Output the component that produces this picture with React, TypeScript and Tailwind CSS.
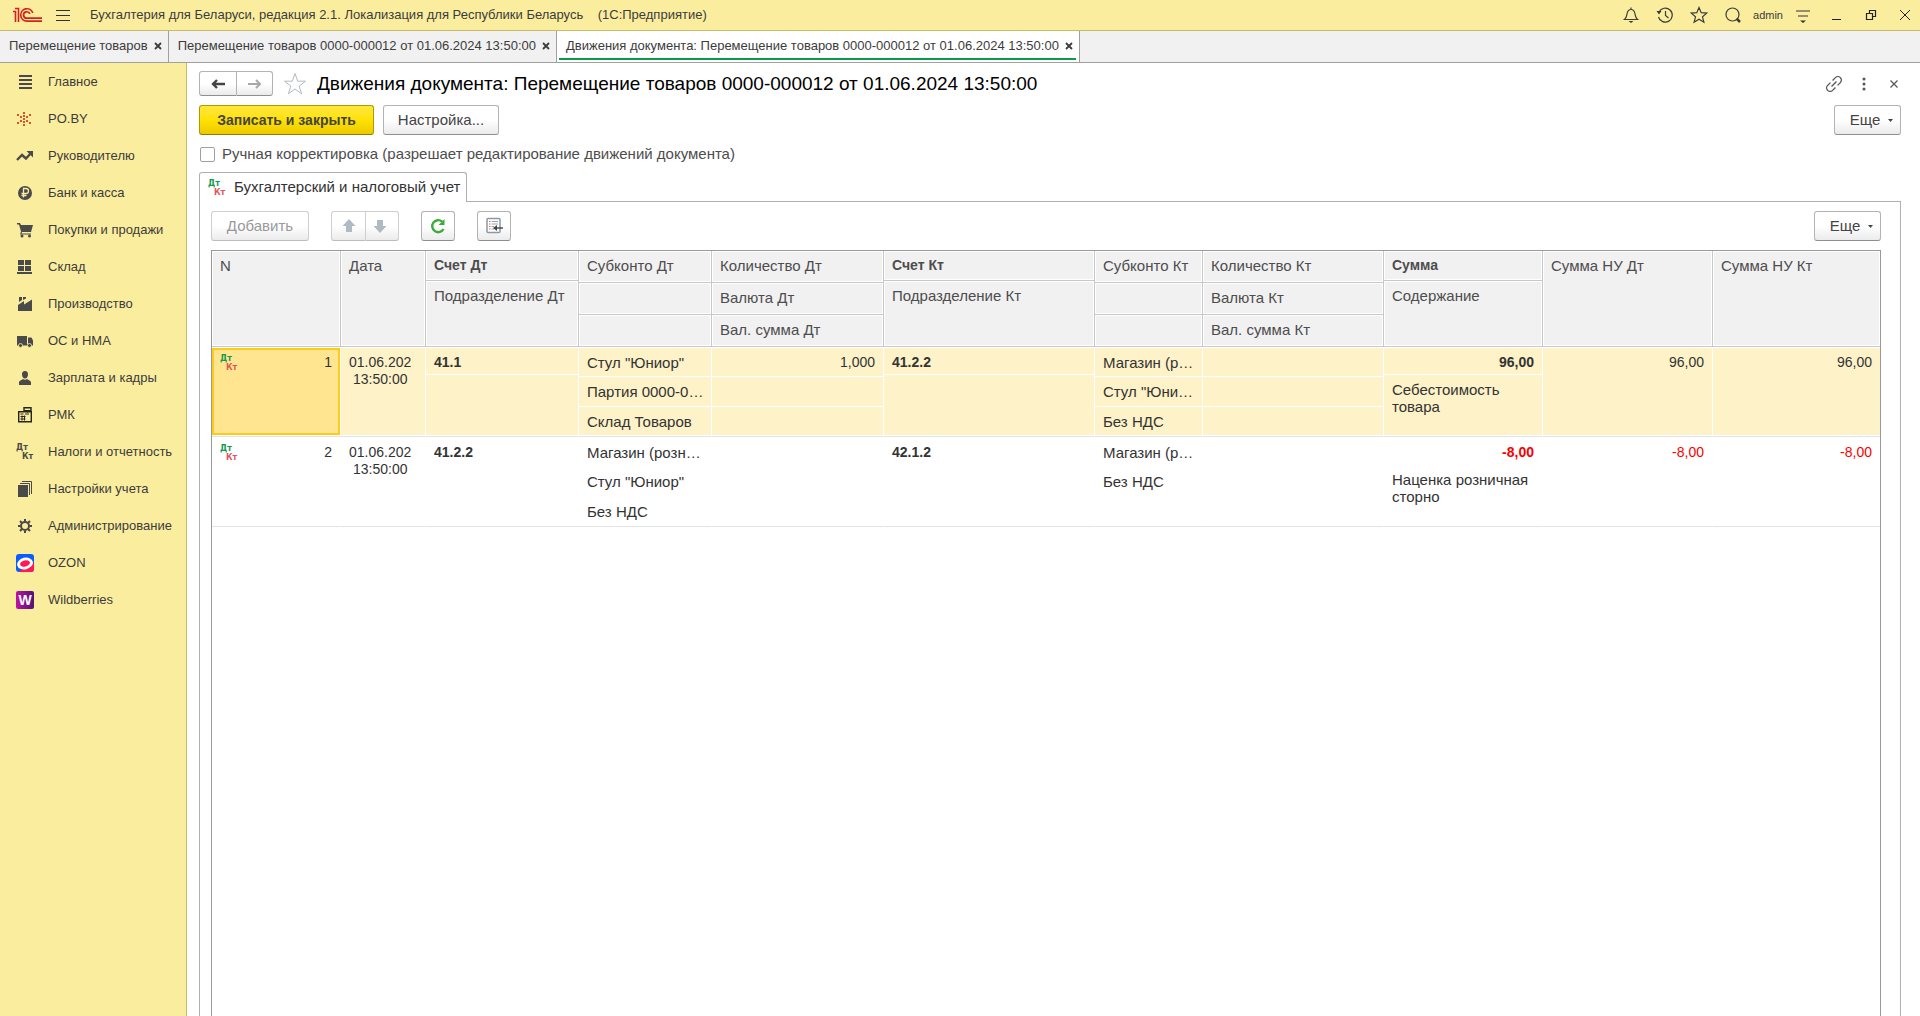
import type { ReactNode } from "react";

const Glyph = ({ children, size = 18 }: { children: ReactNode; size?: number }) => (
  <svg width={size} height={size} viewBox={`0 0 ${size} ${size}`} fill="none" aria-hidden="true" className="shrink-0">
    {children}
  </svg>
);

const DtKt = ({ dt = "#16994f", kt = "#e0565b" }: { dt?: string; kt?: string }) => (
  <svg
    width="18"
    height="18"
    viewBox="0 0 18 18"
    aria-hidden="true"
    className="shrink-0 overflow-visible font-['DejaVu_Sans',sans-serif] font-bold"
  >
    <text x="0" y="7" fontSize="8" fill={dt}>Дт</text>
    <text x="6" y="16" fontSize="8" fill={kt}>Кт</text>
  </svg>
);

const ink = "#4a4a4a";

const menu: { label: string; icon: ReactNode }[] = [
  {
    label: "Главное",
    icon: <Glyph><path d="M3 3h13M3 7h13M3 11h13M3 15h13" stroke={ink} strokeWidth="2" /></Glyph>,
  },
  {
    label: "PO.BY",
    icon: (
      <Glyph>
        <path
          fill="#d9532c"
          d="M7 2h2v2H7zM7 5h2v2H7zM7 8h2v2H7zM7 11h2v2H7zM7 14h2v2H7zM1 4h2v2H1zM4 6h2v2H4zM13 4h2v2h-2zM10 6h2v2h-2zM1 12h2v2H1zM4 10h2v2H4zM10 10h2v2h-2zM13 12h2v2h-2z"
        />
      </Glyph>
    ),
  },
  {
    label: "Руководителю",
    icon: <Glyph><path d="M1 13l5-5 4 3.500L15 6" stroke={ink} strokeWidth="2.400" /><path d="M10.500 4H17v6.500z" fill={ink} /></Glyph>,
  },
  {
    label: "Банк и касса",
    icon: (
      <Glyph>
        <circle cx="9" cy="9" r="7" fill={ink} />
        <path d="M7.500 13.500v-9H10a2.300 2.300 0 010 5H5.500M5.500 11.500h5" stroke="#fbed9e" strokeWidth="1.300" />
      </Glyph>
    ),
  },
  {
    label: "Покупки и продажи",
    icon: (
      <Glyph>
        <path d="M1 2h3l1 2h12l-2 7H6l-.5 1.500H15V13.500H4L5 10.500 3 3.500H1z" fill={ink} />
        <circle cx="6" cy="15" r="1.500" fill={ink} />
        <circle cx="13.500" cy="15" r="1.500" fill={ink} />
      </Glyph>
    ),
  },
  {
    label: "Склад",
    icon: <Glyph><path d="M2 2h6v5H2zM9 2h6v5H9zM2 8h6v5H2zM9 8h6v5H9zM1 14h15v2H1z" fill={ink} /></Glyph>,
  },
  {
    label: "Производство",
    icon: <Glyph><path d="M2 16v-6l6-4v3.500l8-5V16zM3 2h3v3L3 7zM7 2h3v1.500L7 5z" fill={ink} /></Glyph>,
  },
  {
    label: "ОС и НМА",
    icon: (
      <Glyph>
        <path d="M1 4h10v8H1zM12 5.500h3.500L17 8.500V12h-5zM1 12h16v1.500H1z" fill={ink} />
        <circle cx="4.500" cy="13.500" r="2" fill={ink} stroke="#fbed9e" strokeWidth="0.800" />
        <circle cx="13.500" cy="13.500" r="2" fill={ink} stroke="#fbed9e" strokeWidth="0.800" />
      </Glyph>
    ),
  },
  {
    label: "Зарплата и кадры",
    icon: <Glyph><path d="M9 2c2 0 3.200 1.400 3 3.500-.1 2-1 4-3 4s-2.900-2-3-4C5.800 3.400 7 2 9 2zM3 16v-2.500C3 11.500 6 11 7 10c1 1 3 1 4 0 1 1 4 1.500 4 3.500V16z" fill={ink} /></Glyph>,
  },
  {
    label: "РМК",
    icon: (
      <Glyph>
        <path d="M2.700 5.700h12.600v10H2.700zM8 1.700h7v3H8zM11.500 4.700v2" stroke="#26251c" strokeWidth="1.400" />
        <path d="M4.500 8h3M4.500 10.500h5M4.500 13h5M9 8h4M6 9.500v5M8.500 9.500v5" stroke="#26251c" />
      </Glyph>
    ),
  },
  { label: "Налоги и отчетность", icon: <DtKt dt={ink} kt={ink} /> },
  {
    label: "Настройки учета",
    icon: <Glyph><path d="M2 5h10v12H2z" fill={ink} /><path d="M4 3.500h9.500V15M6 1.500h9.500V14" stroke={ink} /></Glyph>,
  },
  {
    label: "Администрирование",
    icon: (
      <Glyph>
        <circle cx="9" cy="9" r="4" stroke={ink} strokeWidth="2" />
        <path d="M9 2v2.500M9 13.500V16M2 9h2.500M13.500 9H16M4 4l2 2M12 12l2 2M4 14l2-2M12 6l2-2" stroke={ink} strokeWidth="2" />
      </Glyph>
    ),
  },
  {
    label: "OZON",
    icon: (
      <Glyph>
        <rect width="18" height="18" rx="3" fill="#0a5cff" />
        <path d="M3 18l5-5 10-4v6a3 3 0 01-3 3z" fill="#ff1a55" />
        <ellipse cx="9" cy="9.500" rx="8" ry="5.800" transform="rotate(-14 9 9.500)" fill="#fff" />
        <ellipse cx="9" cy="9.500" rx="5" ry="3" transform="rotate(-14 9 9.500)" fill="#ff1a55" />
      </Glyph>
    ),
  },
  {
    label: "Wildberries",
    icon: (
      <Glyph>
        <defs>
          <linearGradient id="wb" x1="0" x2="1">
            <stop stopColor="#c012a0" />
            <stop offset="1" stopColor="#4f1379" />
          </linearGradient>
        </defs>
        <rect width="18" height="18" rx="2" fill="url(#wb)" />
        <text x="9" y="14" textAnchor="middle" fontSize="14" fontWeight="700" fill="#fff">W</text>
      </Glyph>
    ),
  },
];

const tabs = [
  { label: "Перемещение товаров", active: false },
  { label: "Перемещение товаров 0000-000012 от 01.06.2024 13:50:00", active: false },
  { label: "Движения документа: Перемещение товаров 0000-000012 от 01.06.2024 13:50:00", active: true },
];

const entries = [
  {
    n: "1",
    selected: true,
    debit: "41.1",
    debitSub: ['Стул "Юниор"', "Партия 0000-0…", "Склад Товаров"],
    quantity: "1,000",
    credit: "41.2.2",
    creditSub: ["Магазин (р…", 'Стул "Юни…', "Без НДС"],
    sum: "96,00",
    note: "Себестоимость товара",
  },
  {
    n: "2",
    selected: false,
    debit: "41.2.2",
    debitSub: ["Магазин (розн…", 'Стул "Юниор"', "Без НДС"],
    quantity: "",
    credit: "42.1.2",
    creditSub: ["Магазин (р…", "Без НДС", ""],
    sum: "-8,00",
    note: "Наценка розничная сторно",
  },
];

type HeaderProps = { children?: ReactNode; span?: number; bold?: boolean; edge?: boolean };

const Header = ({ children, span = 1, bold, edge }: HeaderProps) => (
  <th
    rowSpan={span}
    className={`truncate border-b border-[#c8c8cb] bg-[#f1f1f1] pt-1.5 pr-1 pl-2 text-left align-top leading-[17px] shadow-[inset_0_0_0_1px_#fff] ${edge ? "" : "border-r"} ${bold ? "text-sm/[17px] font-bold" : "font-normal"}`}
  >
    {children}
  </th>
);

type CellProps = {
  children?: ReactNode;
  span?: number;
  selected: boolean;
  top?: boolean;
  bottom?: boolean;
  edge?: boolean;
  className?: string;
};

const Cell = ({ children, span = 1, selected, top, bottom, edge, className = "truncate pr-1" }: CellProps) => (
  <td
    rowSpan={span}
    className={`border-b border-r-white pt-1.5 pl-2 align-top leading-[17px] ${edge ? "" : "border-r"} ${selected ? "bg-[#fdf2c8]" : "bg-white"} ${top ? "border-t border-t-white" : ""} ${bottom ? "border-b-[#e3e3e6] shadow-[inset_0_-1px_0_#fff]" : "border-b-white"} ${className}`}
  >
    {children}
  </td>
);

const buttonShape = "flex items-center justify-center rounded-[3px] border bg-linear-to-b from-white from-50% to-[#ebebeb]";
const enabledLook = "border-[#b3b3b3] border-b-[#8f8f8f] text-[#444]";
const disabledLook = "border-[#cfcfcf] border-b-[#bdbdbd] text-[#999]";

const More = () => (
  <button type="button" className={`${buttonShape} ${enabledLook} h-[30px] w-[67px] gap-2 pl-2`}>
    Еще
    <svg width="5" height="3" viewBox="0 0 5 3" aria-hidden="true"><path d="M0 0h5L2.500 3z" fill="#444" /></svg>
  </button>
);

const TopBar = () => (
  <header className="flex h-[31px] shrink-0 items-center border-b border-[#c9bb6c] bg-[#fbed9e] pr-1.5 pl-3 text-[#3c3c3c]">
    <svg width="30" height="16" viewBox="0 0 30 16" fill="none" aria-label="1С" className="shrink-0" stroke="#d6201f">
      <path d="M1 4.500h2.500V15M3 1.500h3.500V15" strokeWidth="1.600" />
      <path d="M20.800 6A6.200 6.200 0 1015 14.200H30" strokeWidth="1.700" />
      <path d="M17.800 7A3.200 3.200 0 1015 11.200H30" strokeWidth="1.700" />
    </svg>
    <button type="button" aria-label="Меню" className="ml-3">
      <Glyph><path d="M2 4.500h14M2 9.500h14M2 14.500h14" stroke="#333" /></Glyph>
    </button>
    <h1 className="ml-[18px] text-[13px] whitespace-pre">
      Бухгалтерия для Беларуси, редакция 2.1. Локализация для Республики Беларусь{"    "}(1С:Предприятие)
    </h1>
    <div className="ml-auto flex items-center gap-4">
      <button type="button" aria-label="Уведомления">
        <Glyph>
          <path d="M2.500 13.500h13c-2-1.500-2-3-2.500-5.500C12.500 5 11.500 3.500 9 3.500S5.500 5 5 8c-.5 2.500-.5 4-2.500 5.500zM9 1.500v2" stroke="#3c3c3c" strokeWidth="1.200" />
          <path d="M6.500 15h5L9 17z" fill="#3c3c3c" />
        </Glyph>
      </button>
      <button type="button" aria-label="История">
        <Glyph>
          <path d="M3 6a7 7 0 11-.5 5M9.500 5v4.500l3 2.500" stroke="#3c3c3c" strokeWidth="1.200" />
          <path d="M.5 5h5L3 8.500z" fill="#3c3c3c" />
        </Glyph>
      </button>
      <button type="button" aria-label="Избранное">
        <Glyph><path d="M9 1.500l2.200 5.200 5.600.4-4.300 3.700 1.400 5.500L9 13.300l-4.900 3 1.400-5.500L1.200 7.100l5.600-.4z" stroke="#3c3c3c" strokeWidth="1.200" /></Glyph>
      </button>
      <button type="button" aria-label="Поиск">
        <Glyph>
          <circle cx="8.500" cy="8.500" r="6.500" stroke="#3c3c3c" strokeWidth="1.200" />
          <path d="M12.500 12.500l3.500 3.500" stroke="#3c3c3c" strokeWidth="2.500" />
        </Glyph>
      </button>
      <button type="button" className="-mx-[5px] text-[11px]">admin</button>
      <button type="button" aria-label="Настройки">
        <Glyph>
          <path d="M2 5h14M4 10h10" stroke="#333" strokeWidth="1.200" />
          <path d="M6 14.500h6L9 17z" fill="#333" />
        </Glyph>
      </button>
      <button type="button" aria-label="Свернуть">
        <Glyph><path d="M4 13.500h9" stroke="#222" /></Glyph>
      </button>
      <button type="button" aria-label="Восстановить">
        <Glyph><path d="M4.500 7.500h6v6h-6zM7.500 7V4.500h6v6H11" stroke="#222" strokeWidth="1.200" /></Glyph>
      </button>
      <button type="button" aria-label="Закрыть">
        <Glyph><path d="M4 4l10 10M14 4L4 14" stroke="#222" /></Glyph>
      </button>
    </div>
  </header>
);

const OpenTabs = () => (
  <nav className="flex h-8 shrink-0 border-b border-[#a0a0a0] bg-[#f1f1f1] text-[13px] text-[#3c3c3c]">
    {tabs.map((tab) => (
      <div
        key={tab.label}
        className={`flex flex-col border-r border-[#a0a0a0] pr-[3px] pl-0.5 ${tab.active ? "bg-white" : ""}`}
      >
        <div className="flex flex-1 items-center gap-1.5 pt-0.5 pr-[3px] pl-[7px] whitespace-nowrap">
          <a href="#">{tab.label}</a>
          <button type="button" aria-label="Закрыть вкладку">
            <svg width="8" height="8" viewBox="0 0 8 8" aria-hidden="true"><path d="M1 1l6 6M7 1L1 7" stroke="#3c3c3c" strokeWidth="1.800" /></svg>
          </button>
        </div>
        <div className={`mb-0.5 h-0.5 ${tab.active ? "bg-[#0a9a4b]" : ""}`} />
      </div>
    ))}
  </nav>
);

const EntriesTable = () => (
  <table className="w-full table-fixed border-separate border-spacing-0 text-[#333]">
    <colgroup>
      <col className="w-[129px]" />
      <col className="w-[85px]" />
      <col className="w-[153px]" />
      <col className="w-[133px]" />
      <col className="w-[172px]" />
      <col className="w-[211px]" />
      <col className="w-[108px]" />
      <col className="w-[181px]" />
      <col className="w-[159px]" />
      <col className="w-[170px]" />
      <col className="w-[167px]" />
    </colgroup>
    <thead className="text-[#4d4d4d]">
      <tr className="h-[30px]">
        <Header span={4}>N</Header>
        <Header span={4}>Дата</Header>
        <Header bold>Счет Дт</Header>
        <Header span={2}>Субконто Дт</Header>
        <Header span={2}>Количество Дт</Header>
        <Header bold>Счет Кт</Header>
        <Header span={2}>Субконто Кт</Header>
        <Header span={2}>Количество Кт</Header>
        <Header bold>Сумма</Header>
        <Header span={4}>Сумма НУ Дт</Header>
        <Header span={4} edge>Сумма НУ Кт</Header>
      </tr>
      <tr className="h-0.5">
        <Header span={3}>Подразделение Дт</Header>
        <Header span={3}>Подразделение Кт</Header>
        <Header span={3}>Содержание</Header>
      </tr>
      <tr className="h-8">
        <Header />
        <Header>Валюта Дт</Header>
        <Header />
        <Header>Валюта Кт</Header>
      </tr>
      <tr className="h-8">
        <Header />
        <Header>Вал. сумма Дт</Header>
        <Header />
        <Header>Вал. сумма Кт</Header>
      </tr>
    </thead>
    {entries.map(({ n, selected, debit, debitSub, quantity, credit, creditSub, sum, note }) => {
      const amount = `truncate pr-2 text-right text-sm/[17px] ${sum.startsWith("-") ? "text-[#fa0000]" : ""}`;
      return (
        <tbody key={n}>
          <tr className="h-7">
            <td rowSpan={4} className="border-y border-r border-t-white border-r-white border-b-[#e3e3e6] p-0 pb-px align-top">
              <div
                className={`flex h-[87px] justify-between border-2 px-1.5 pt-1 text-sm/[17px] ${selected ? "border-[#fccb1c] bg-[#ffe590]" : "border-transparent"}`}
              >
                <DtKt />
                {n}
              </div>
            </td>
            <Cell span={4} selected={selected} top bottom className="overflow-hidden text-sm/[17px]">
              <span className="block">01.06.202</span>
              <span className="block pl-1">13:50:00</span>
            </Cell>
            <Cell selected={selected} top className="truncate text-sm/[17px] font-bold">{debit}</Cell>
            <Cell span={2} selected={selected} top>{debitSub[0]}</Cell>
            <Cell span={2} selected={selected} top className="truncate pr-2 text-right text-sm/[17px]">{quantity}</Cell>
            <Cell selected={selected} top className="truncate text-sm/[17px] font-bold">{credit}</Cell>
            <Cell span={2} selected={selected} top>{creditSub[0]}</Cell>
            <Cell span={2} selected={selected} top />
            <Cell selected={selected} top className={`${amount} font-bold`}>{sum}</Cell>
            <Cell span={4} selected={selected} top bottom className={amount}>{sum}</Cell>
            <Cell span={4} selected={selected} top bottom edge className={amount}>{sum}</Cell>
          </tr>
          <tr className="h-0.5">
            <Cell span={3} selected={selected} bottom />
            <Cell span={3} selected={selected} bottom />
            <Cell span={3} selected={selected} bottom className="overflow-hidden pr-2">{note}</Cell>
          </tr>
          <tr className="h-[30px]">
            <Cell selected={selected}>{debitSub[1]}</Cell>
            <Cell selected={selected} />
            <Cell selected={selected}>{creditSub[1]}</Cell>
            <Cell selected={selected} />
          </tr>
          <tr className="h-[30px]">
            <Cell selected={selected} bottom>{debitSub[2]}</Cell>
            <Cell selected={selected} bottom />
            <Cell selected={selected} bottom>{creditSub[2]}</Cell>
            <Cell selected={selected} bottom />
          </tr>
        </tbody>
      );
    })}
  </table>
);

const App = () => {
  return (
    <div className="flex h-screen flex-col overflow-hidden bg-white font-['Liberation_Sans',Arial,sans-serif] text-[15px]">
      <TopBar />
      <OpenTabs />

      <div className="flex min-h-0 flex-1">
        {/* Sections */}
        <aside className="w-[187px] shrink-0 overflow-hidden border-r border-[#c9bb6c] bg-[#fbed9e] text-[13px] text-[#3c3c3c]">
          {menu.map((item) => (
            <a key={item.label} href="#" className="flex h-[37px] items-center gap-3.5 pl-4 whitespace-nowrap">
              {item.icon}
              {item.label}
            </a>
          ))}
        </aside>

        <main className="flex min-w-0 flex-1 flex-col pt-2 pr-[19px] pl-3">
          {/* Document title */}
          <div className="flex h-[25px] items-center">
            <div className="flex">
              <button type="button" aria-label="Назад" className={`${buttonShape} ${enabledLook} h-[25px] w-[38px] rounded-r-none`}>
                <Glyph><path d="M16 9H4M8 5L4 9l4 4" stroke="#444" strokeWidth="2.400" /></Glyph>
              </button>
              <button type="button" aria-label="Вперед" className={`${buttonShape} ${enabledLook} h-[25px] w-9 rounded-l-none border-l-0`}>
                <Glyph><path d="M2 9h12M10 5l4 4-4 4" stroke="#a8a8a8" strokeWidth="2" /></Glyph>
              </button>
            </div>
            <button type="button" aria-label="В избранное" className="ml-2.5">
              <Glyph size={24}>
                <path d="M12 1.500l2.700 7.700h7.800l-6.300 4.800 2.400 7.800L12 17l-6.600 4.800L7.800 14 1.500 9.200h7.800z" stroke="#b3bac2" />
              </Glyph>
            </button>
            <h2 className="ml-2.5 truncate text-[19px] leading-6 text-black">
              Движения документа: Перемещение товаров 0000-000012 от 01.06.2024 13:50:00
            </h2>
            <div className="-mr-0.5 ml-auto flex items-center gap-3">
              <button type="button" aria-label="Ссылка">
                <Glyph>
                  <g transform="rotate(-45 9 9)" stroke="#555" strokeWidth="1.300">
                    <path d="M7.500 5.500H3.500a3.500 3.500 0 000 7h4M10.500 5.500h4a3.500 3.500 0 010 7h-4M5.500 9h7" />
                  </g>
                </Glyph>
              </button>
              <button type="button" aria-label="Действия">
                <Glyph>
                  <circle cx="9" cy="4" r="1.500" fill="#555" />
                  <circle cx="9" cy="9" r="1.500" fill="#555" />
                  <circle cx="9" cy="14" r="1.500" fill="#555" />
                </Glyph>
              </button>
              <button type="button" aria-label="Закрыть форму">
                <Glyph><path d="M5.500 5.500l7 7M12.500 5.500l-7 7" stroke="#555" strokeWidth="1.200" /></Glyph>
              </button>
            </div>
          </div>

          {/* Form commands */}
          <div className="mt-[9px] flex gap-[9px]">
            <button
              type="button"
              className="h-[30px] w-[175px] rounded-[3px] border border-[#b09a00] border-b-[#8f7d00] bg-linear-to-b from-[#ffe838] via-[#ffe100] to-[#ecca00] text-sm font-bold text-[#444]"
            >
              Записать и закрыть
            </button>
            <button type="button" className={`${buttonShape} ${enabledLook} h-[30px] w-[116px]`}>Настройка...</button>
            <div className="ml-auto">
              <More />
            </div>
          </div>

          <div className="mt-[11px] flex h-4 items-center gap-[7px] pl-px text-[#4d4d4d]">
            <input
              id="manual"
              type="checkbox"
              className="size-[15px] appearance-none rounded-xs border border-[#a0a0a0] bg-white checked:bg-[#ffe100]"
            />
            <label htmlFor="manual">Ручная корректировка (разрешает редактирование движений документа)</label>
          </div>

          {/* Register tab, overlaps the top border of the panel */}
          <div className="z-10 mt-2.5 -mb-px flex">
            <button
              type="button"
              className="flex h-[30px] items-center gap-2 rounded-t-[3px] border border-b-0 border-[#b0b0b0] bg-white pr-1.5 pl-2 text-[#333]"
            >
              <DtKt />
              Бухгалтерский и налоговый учет
            </button>
          </div>

          <section className="flex min-h-0 flex-1 flex-col border border-b-0 border-[#b0b0b0] pt-[9px] pr-[19px] pl-[11px]">
            <div className="flex">
              <button type="button" disabled className={`${buttonShape} ${disabledLook} h-[30px] w-[98px]`}>Добавить</button>
              <button
                type="button"
                disabled
                aria-label="Переместить вверх"
                className={`${buttonShape} ${disabledLook} ml-[22px] h-[30px] w-[35px] rounded-r-none`}
              >
                <Glyph><path d="M9 2l6.500 7H12v6H6V9H2.500z" fill="#b0bac2" /></Glyph>
              </button>
              <button
                type="button"
                disabled
                aria-label="Переместить вниз"
                className={`${buttonShape} ${disabledLook} h-[30px] w-[33px] rounded-l-none border-l-0 pr-1`}
              >
                <Glyph><path d="M9 16L2.500 9H6V3h6v6h3.500z" fill="#b0bac2" /></Glyph>
              </button>
              <button type="button" aria-label="Обновить" className={`${buttonShape} ${enabledLook} ml-[22px] h-[30px] w-[34px]`}>
                <Glyph>
                  <path d="M14.500 12A6 6 0 1113 4.500" stroke="#3caa3c" strokeWidth="2.400" />
                  <path d="M15.500 2v6h-6z" fill="#3caa3c" />
                </Glyph>
              </button>
              <button type="button" aria-label="Вывести список" className={`${buttonShape} ${enabledLook} ml-[22px] h-[30px] w-[34px]`}>
                <Glyph>
                  <rect x="2" y="1.500" width="13" height="14" rx="1" fill="#fff" stroke="#8b98a5" strokeWidth="1.500" />
                  <path d="M4 4.500h1.500M4 7h1.500M4 9.500h1.500M4 12h1.500" stroke="#e0704a" />
                  <path d="M6.500 4.500H13M6.500 7H13M6.500 9.500H9M6.500 12H9" stroke="#9aa5b0" />
                  <path d="M18 11h-7" stroke="#444" strokeWidth="1.400" />
                  <path d="M12 8v6L8 11z" fill="#444" />
                </Glyph>
              </button>
              <div className="ml-auto">
                <More />
              </div>
            </div>

            <div className="mt-[9px] min-h-0 flex-1 overflow-hidden border border-b-0 border-[#999]">
              <EntriesTable />
            </div>
          </section>
        </main>
      </div>
    </div>
  );
};

export default App;
